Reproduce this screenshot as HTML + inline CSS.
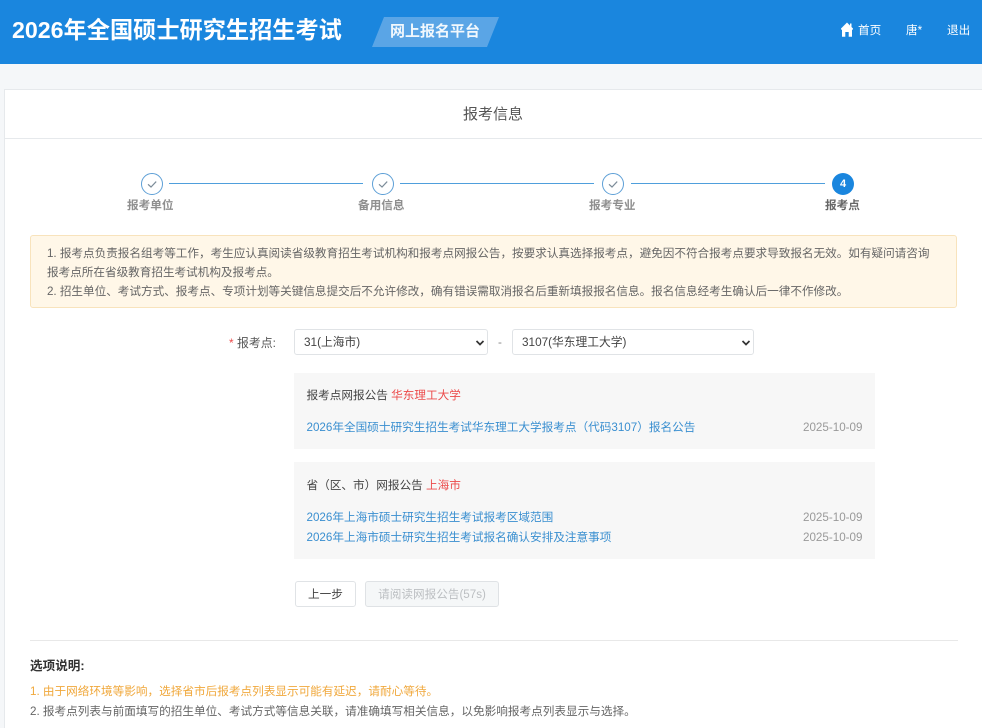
<!DOCTYPE html>
<html lang="zh-CN">
<head>
<meta charset="utf-8">
<title>报考信息</title>
<style>
html,body{margin:0;padding:0;width:982px;height:728px;overflow:hidden;background:#f5f7f9;font-family:"Liberation Sans","Noto Sans CJK SC",sans-serif;color:#555;}
.a{position:absolute;white-space:nowrap;line-height:20px;font-size:11.64px;}
.hd{position:absolute;left:0;top:0;width:982px;height:64px;background:#1a86de;}
.card{position:absolute;left:4px;top:89px;width:978px;height:639px;background:#fff;border:1px solid #e6e9ec;border-right:none;border-bottom:none;box-sizing:border-box;}
.line{position:absolute;height:1px;background:#4f9fdc;top:183px;}
.st{position:absolute;top:173px;width:20px;height:20px;border:1px solid #5d9fd6;border-radius:50%;background:#fff;}
.lab{color:#8f8f8f;font-weight:bold;font-size:11.64px;}
.box{position:absolute;left:294px;width:581px;background:#f7f7f7;}
.sel{position:absolute;top:329px;height:26px;box-sizing:border-box;border:1px solid #e0e3e6;border-radius:3px;background:#fff;}
.link{color:#3a8fd0;}
.dt{color:#999;}
.red{color:#ec4b4b;}
.ttl{color:#444;}
</style>
</head>
<body>
<div class="hd"></div>
<div class="a" style="left:12px;top:14px;line-height:32px;font-size:23.2px;font-weight:bold;color:#fff;">2026年全国硕士研究生招生考试</div>
<svg style="position:absolute;left:372px;top:17px" width="128" height="30"><polygon points="12,0 127,0 115,30 0,30" fill="#5aa5e6"/></svg>
<div class="a" style="left:390px;top:21px;line-height:22px;font-size:15px;font-weight:bold;color:#f2f8fd;">网上报名平台</div>
<svg style="position:absolute;left:840px;top:22px" width="14" height="15" viewBox="0 0 14 15"><path d="M7 0.500L1 6.500V7.800L2 7.500V14.800H5.300V10H8.700V14.800H12V7.500L13 7.800V6.500L11.500 5V1.500H10V3.500Z" fill="#fff"/></svg>
<div class="a" style="left:858px;top:21px;color:#fff;">首页</div>
<div class="a" style="left:906px;top:21px;color:#fff;">唐*</div>
<div class="a" style="left:947px;top:21px;color:#fff;">退出</div>

<div class="card"></div>
<div style="position:absolute;left:5px;top:138px;width:977px;height:1px;background:#e6e9ec"></div>
<div class="a" style="left:463px;top:105px;font-size:15px;color:#555;">报考信息</div>

<div class="line" style="left:169px;width:194px"></div>
<div class="line" style="left:400px;width:194px"></div>
<div class="line" style="left:631px;width:194px"></div>
<div class="st" style="left:141px"></div>
<div class="st" style="left:372px"></div>
<div class="st" style="left:602px"></div>
<svg style="position:absolute;left:141px;top:173px" width="22" height="22"><path d="M7 11.300L10 14L15.200 8.600" fill="none" stroke="#7c8c99" stroke-width="1.200"/></svg>
<svg style="position:absolute;left:372px;top:173px" width="22" height="22"><path d="M7 11.300L10 14L15.200 8.600" fill="none" stroke="#7c8c99" stroke-width="1.200"/></svg>
<svg style="position:absolute;left:602px;top:173px" width="22" height="22"><path d="M7 11.300L10 14L15.200 8.600" fill="none" stroke="#7c8c99" stroke-width="1.200"/></svg>
<div style="position:absolute;left:832px;top:173px;width:22px;height:22px;border-radius:50%;background:#1a86de;color:#fff;font-size:11px;font-weight:bold;line-height:22px;text-align:center;">4</div>
<div class="a lab" style="left:127px;top:196px;">报考单位</div>
<div class="a lab" style="left:358px;top:196px;">备用信息</div>
<div class="a lab" style="left:589px;top:196px;">报考专业</div>
<div class="a lab" style="left:825px;top:196px;color:#666;">报考点</div>

<div style="position:absolute;left:30px;top:235px;width:927px;height:73px;box-sizing:border-box;background:#fff7e8;border:1px solid #f8e3bc;border-radius:3px;"></div>
<div class="a" style="left:47px;top:244px;line-height:19px;color:#666;letter-spacing:-0.03px;">1. 报考点负责报名组考等工作，考生应认真阅读省级教育招生考试机构和报考点网报公告，按要求认真选择报考点，避免因不符合报考点要求导致报名无效。如有疑问请咨询<br>报考点所在省级教育招生考试机构及报考点。<br>2. 招生单位、考试方式、报考点、专项计划等关键信息提交后不允许修改，确有错误需取消报名后重新填报报名信息。报名信息经考生确认后一律不作修改。</div>

<div class="a" style="left:229px;top:333px;color:#555;font-size:11.9px;"><span style="color:#ec4b4b">*</span> 报考点:</div>
<div class="sel" style="left:294px;width:194px;"></div>
<div class="sel" style="left:512px;width:242px;"></div>
<div class="a" style="left:304px;top:333px;color:#444;font-size:11.75px;">31(上海市)</div>
<svg style="position:absolute;left:475px;top:339px" width="10" height="8"><path d="M1.500 2L5 5.500L8.500 2" fill="none" stroke="#333" stroke-width="1.700"/></svg>
<div class="a" style="left:498px;top:333px;color:#888;">-</div>
<div class="a" style="left:522px;top:333px;color:#444;font-size:11.75px;">3107(华东理工大学)</div>
<svg style="position:absolute;left:741px;top:339px" width="10" height="8"><path d="M1.500 2L5 5.500L8.500 2" fill="none" stroke="#333" stroke-width="1.700"/></svg>

<div class="box" style="top:373px;height:76px;"></div>
<div class="a ttl" style="left:306.5px;top:386px;">报考点网报公告 <span class="red">华东理工大学</span></div>
<div class="a link" style="left:306.5px;top:418px;">2026年全国硕士研究生招生考试华东理工大学报考点（代码3107）报名公告</div>
<div class="a dt" style="left:803px;top:418px;">2025-10-09</div>

<div class="box" style="top:462px;height:97px;"></div>
<div class="a ttl" style="left:306.5px;top:476px;">省（区、市）网报公告 <span class="red">上海市</span></div>
<div class="a link" style="left:306.5px;top:508px;">2026年上海市硕士研究生招生考试报考区域范围</div>
<div class="a dt" style="left:803px;top:508px;">2025-10-09</div>
<div class="a link" style="left:306.5px;top:528px;">2026年上海市硕士研究生招生考试报名确认安排及注意事项</div>
<div class="a dt" style="left:803px;top:528px;">2025-10-09</div>

<div style="position:absolute;left:295px;top:581px;width:61px;height:26px;box-sizing:border-box;background:#fff;border:1px solid #e0e3e6;border-radius:3px;color:#444;font-size:11.64px;line-height:26px;text-align:center;">上一步</div>
<div style="position:absolute;left:365px;top:581px;width:134px;height:26px;box-sizing:border-box;background:#f5f7f8;border:1px solid #dfe2e5;border-radius:3px;color:#bcbfc2;font-size:11.64px;line-height:26px;text-align:center;">请阅读网报公告(57s)</div>

<div style="position:absolute;left:30px;top:640px;width:928px;height:1px;background:#e8e8e8"></div>
<div class="a" style="left:30px;top:656px;font-size:12.6px;font-weight:bold;color:#333;">选项说明:</div>
<div class="a" style="left:30px;top:682px;color:#f0a83c;">1. 由于网络环境等影响，选择省市后报考点列表显示可能有延迟，请耐心等待。</div>
<div class="a" style="left:30px;top:702px;color:#666;">2. 报考点列表与前面填写的招生单位、考试方式等信息关联，请准确填写相关信息，以免影响报考点列表显示与选择。</div>
</body>
</html>
